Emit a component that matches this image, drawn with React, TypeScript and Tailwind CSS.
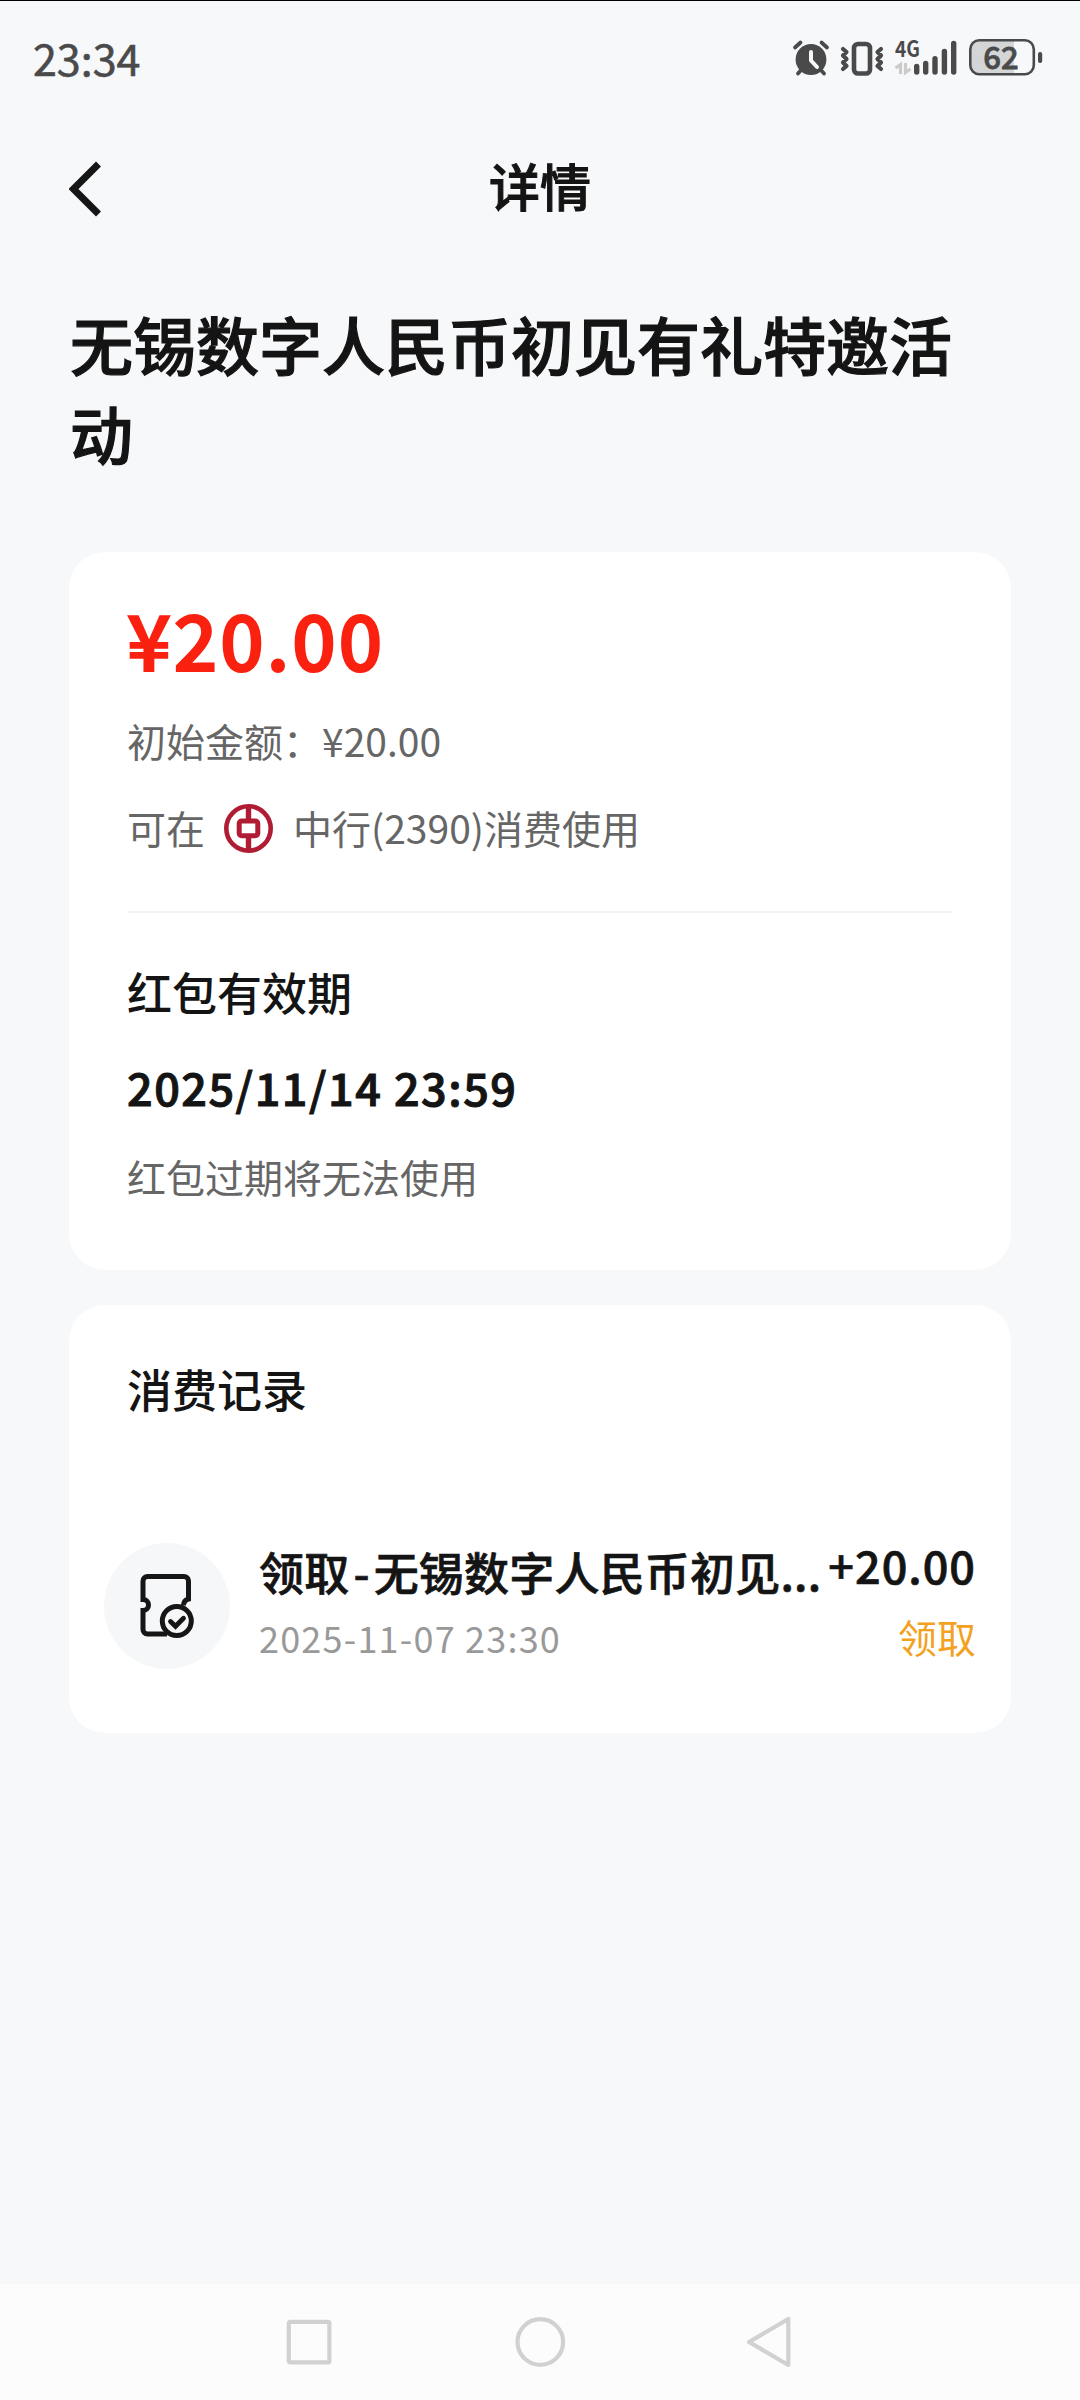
const records = [
  {
    id: 1,
    name: '无锡数字人民币初见...',
    time: '2025-11-07 23:30',
    amount: '+20.00',
    status: '领取',
  },
];

const StatusBar = () => (
  <div className="flex h-[116px] items-start justify-between border-t border-black pr-[36px] pl-[33px] text-[#4a4a4a]">
    <span className="mt-[24px] text-[43px] leading-[64px] [-webkit-text-stroke:0.6px]">23:34</span>
    <svg className="mt-[19px]" width="252" height="76" viewBox="792 20 252 76" fill="none">
      {/* alarm */}
      <circle cx="811" cy="59.5" r="15.4" fill="#4a4a4a" />
      <path d="M795 47.5l5.5-5M827 47.5l-5.5-5M802 69l-4 4.500M820 69l4 4.500" stroke="#4a4a4a" strokeWidth="3.8" strokeLinecap="round" />
      <path d="M811 52v8.5l6 6.500" stroke="#f7f8fa" strokeWidth="4" strokeLinecap="round" strokeLinejoin="round" />
      {/* vibrate */}
      <rect x="854" y="44" width="16" height="29.5" rx="4" stroke="#4a4a4a" strokeWidth="4.6" />
      <path d="M843 49l3.500 3-3.500 3.500 3.500 3.500-3.500 3.500 3.500 3.500-3.500 3M881 49l-3.500 3 3.500 3.500-3.500 3.500 3.500 3.500-3.500 3.500 3.500 3" stroke="#4a4a4a" strokeWidth="4.2" strokeLinecap="round" strokeLinejoin="round" />
      {/* signal */}
      <text x="895" y="57" fill="#4a4a4a" fontSize="22" fontWeight="700" textLength="25" lengthAdjust="spacingAndGlyphs">4G</text>
      <path d="M895.5 68l5-3.500v9.500M905.500 63v9.500l5-3.500" stroke="#cbcbcb" strokeWidth="3.2" />
      <path d="M916.7 66.5v5.5M925.7 63.5v8.5M935 58.8v13.2M944.4 51.5v20.5M953.7 43.5v28.5" stroke="#4a4a4a" strokeWidth="5.4" strokeLinecap="round" />
      {/* battery */}
      <path d="M979 41h35v33h-35a8 8 0 0 1-8-8v-17a8 8 0 0 1 8-8z" fill="#d4d5d6" />
      <rect x="970.3" y="40.3" width="63.5" height="34" rx="9" stroke="#4a4a4a" strokeWidth="2.6" />
      <rect x="1038" y="52" width="4.2" height="11" rx="2" fill="#4a4a4a" />
      <text x="1001" y="69" fill="#4a4a4a" fontSize="31" fontWeight="500" stroke="#4a4a4a" strokeWidth="0.8" textAnchor="middle">62</text>
    </svg>
  </div>
);

const Header = () => (
  <header className="grid h-[143px] grid-cols-3 items-center px-[69px]">
    <svg className="mt-[2px]" width="32" height="56" viewBox="0 0 32 56" fill="none">
      <path d="M29.5 3L4.500 28l25 25" stroke="#161616" strokeWidth="7" />
    </svg>
    <h1 className="-mt-[6px] text-center text-[51px] leading-[72px] font-medium [-webkit-text-stroke:1px]">详情</h1>
  </header>
);

const BankLogo = () => (
  <svg width="49" height="49" viewBox="0 0 49 49" fill="none" stroke="#b01c33">
    <circle cx="24.5" cy="24.5" r="22.2" strokeWidth="4.6" />
    <rect x="15.2" y="17" width="18.6" height="14.8" rx="2.5" strokeWidth="5" />
    <path d="M24.5 3v13M24.5 33v13" strokeWidth="5.4" />
  </svg>
);

const CouponIcon = () => (
  <svg width="54" height="64" viewBox="0 0 54 64" fill="none" stroke="#161616" strokeWidth="5">
    <path d="M27 60H7.5a4.5 4.5 0 0 1-4.5-4.5V36.500c3.500 0 5.500-2.500 5.500-5.500s-2-5.500-5.500-5.500V7a4.5 4.5 0 0 1 4.5-4.5h36.500A4.5 4.5 0 0 1 48.500 7v18c-3.500 1-5 3-5 6.500" />
    <circle cx="36.8" cy="47" r="14.5" />
    <path d="M30.5 47.5l5 4.800 8-8" strokeWidth="4.8" strokeLinecap="round" />
  </svg>
);

const BalanceCard = () => (
  <section className="h-[718px] rounded-[36px] bg-white px-[58px] pt-[36px]">
    <div className="h-[100px] text-[77px] leading-[100px] font-medium tracking-[2.6px] text-[#fa2110] [-webkit-text-stroke:2px]">
      ¥20.00
    </div>
    <div className="mt-[23px] flex h-[58px] items-center text-[39px] leading-[58px] text-[#666]">初始金额：¥20.00</div>
    <div className="mt-[29px] flex h-[58px] items-center text-[39px] leading-[58px] text-[#666]">
      <span>可在</span>
      <span className="mt-[2px] mr-[20px] ml-[19px]">
        <BankLogo />
      </span>
      <span>中行(2390)消费使用</span>
    </div>
    <hr className="mt-[55px] border-t-2 border-[#f3f3f3]" />
    <h3 className="mt-[46px] text-[45px] leading-[66px] font-medium">红包有效期</h3>
    <div className="mt-[29px] text-[45px] leading-[66px] font-medium tracking-[1.5px] [-webkit-text-stroke:1px]">
      2025/11/14 23:59
    </div>
    <div className="mt-[27px] text-[39px] leading-[58px] text-[#666]">红包过期将无法使用</div>
  </section>
);

const RecordsCard = () => (
  <section className="mt-[35px] h-[428px] rounded-[36px] bg-white px-[35px] pt-[51px]">
    <h3 className="pl-[23px] text-[45px] leading-[66px] font-medium">消费记录</h3>
    {records.map((record) => (
      <div key={record.id} className="mt-[121px] flex h-[126px] items-start">
        <div className="flex size-[126px] shrink-0 items-center justify-center rounded-full bg-[#f6f7f9]">
          <CouponIcon />
        </div>
        <div className="ml-[29px] shrink-0">
          <div className="-mt-[4px] text-[45px] leading-[66px] font-medium tracking-[0.2px] whitespace-nowrap [-webkit-text-stroke:0.7px]">
            {record.status}
            <span className="mx-[4px]">-</span>
            {record.name}
          </div>
          <div className="mt-[6px] text-[36px] leading-[52px] tracking-[1.2px] text-[#999]">{record.time}</div>
        </div>
        <div className="flex flex-1 flex-col items-end">
          <div className="-mt-[9px] text-[45px] leading-[62px] font-medium tracking-[1px] [-webkit-text-stroke:0.7px]">
            {record.amount}
          </div>
          <div className="mt-[12px] text-[39px] leading-[56px] text-[#f3a11f]">{record.status}</div>
        </div>
      </div>
    ))}
  </section>
);

const NavigationBar = () => (
  <nav className="flex h-[116px] items-center justify-center bg-[#fcfcfc]">
    <svg width="508" height="52" viewBox="-2 0 508 52" fill="none" stroke="#d1d1d1" strokeWidth="4.2" strokeLinejoin="round">
      <rect x="0.8" y="5.8" width="40.6" height="40.6" rx="1.5" />
      <circle cx="252.3" cy="26" r="22.8" />
      <path d="M500.3 3v46L461 26z" />
    </svg>
  </nav>
);

const App = () => {
  return (
    <div className="flex h-[2400px] w-[1080px] flex-col bg-[#f7f8fa] font-['Noto_Sans_CJK_SC',sans-serif] text-[#141414]">
      <StatusBar />
      <Header />
      <main className="flex-1 px-[69px]">
        <h2 className="mt-[39px] mb-[76px] h-[178px] pl-px text-[63px] leading-[89px] font-medium [-webkit-text-stroke:1.2px]">
          无锡数字人民币初见有礼特邀活动
        </h2>
        <BalanceCard />
        <RecordsCard />
      </main>
      <NavigationBar />
    </div>
  );
};

export default App;
